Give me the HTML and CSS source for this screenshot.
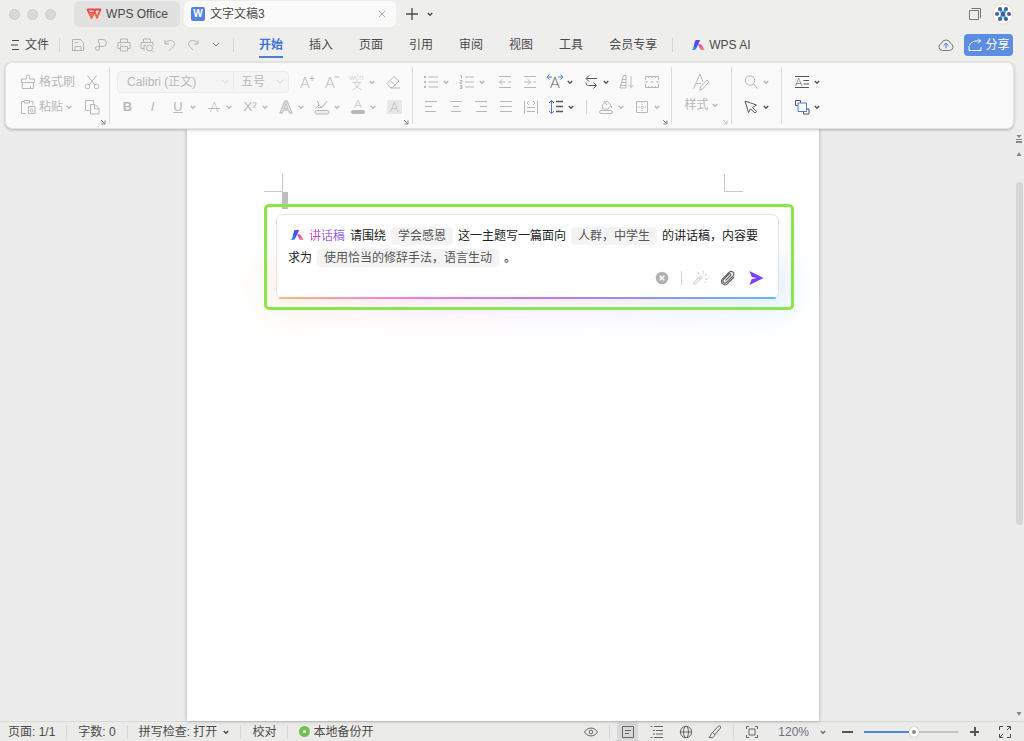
FILE: index.html
```html
<!DOCTYPE html>
<html lang="zh-CN">
<head>
    <meta charset="UTF-8">
    <title>文字文稿3 - WPS Office</title>
    <link rel="stylesheet" href="styles.css">
</head>
<body>
	<!-- 图标 -->
	<svg class="sprite" aria-hidden="true">
		<defs>
			<linearGradient id="ai-blue" x1="0" y1="1" x2="1" y2="0"><stop offset="0" stop-color="#35b4ff"/><stop offset=".5" stop-color="#3a55f5"/><stop offset="1" stop-color="#6d3df2"/></linearGradient>
			<linearGradient id="ai-pink" x1="0" y1="0" x2="1" y2="1"><stop offset="0" stop-color="#a04df5"/><stop offset=".4" stop-color="#f04fc0"/><stop offset="1" stop-color="#ff9a5a"/></linearGradient>
			<linearGradient id="wps-red" x1="0" y1="0" x2="0" y2="1"><stop offset="0" stop-color="#f0404c"/><stop offset="1" stop-color="#ff6a3c"/></linearGradient>
		</defs>
		<symbol id="chev" viewBox="0 0 6 6"><path d="M.8 2 3 4.200 5.200 2" stroke-width="1.500"/></symbol>
		<symbol id="chev-thin" viewBox="0 0 10 6"><path d="M1 1l4 4 4-4"/></symbol>
		<symbol id="corner" viewBox="0 0 6 6"><path d="M1 1l4 4M5 1.500V5H1.500"/></symbol>
		<symbol id="wps" viewBox="0 0 16 12"><path d="M1.500 1.500h6.500L11 10 14.500 1.500H9.500L5.500 10z" fill="none" stroke="url(#wps-red)" stroke-width="1.800" stroke-linejoin="round"/><path d="M3.500 4.500h3L5.500 7" fill="none" stroke="url(#wps-red)" stroke-width="1.200"/></symbol>
		<symbol id="ai" viewBox="0 0 14 12"><path d="M4.800 1h4.400L5.200 9.500Q4.500 11 3 11H.4C1.700 10.500 2 9.500 2.500 8L3.800 3Q4.200 1.400 4.800 1z" fill="url(#ai-blue)" stroke="none"/><path d="M7 5.200H9.300Q10.700 5.300 11.300 6.700L13.600 11H10.600Q9.500 10.900 9 9.800z" fill="url(#ai-pink)" stroke="none"/></symbol>
		<symbol id="menu" viewBox="0 0 12 12"><path d="M3 1.500h7M2 6h7M3 10.500h7"/></symbol>
		<symbol id="close" viewBox="0 0 10 10"><path d="M1 1l8 8M9 1L1 9"/></symbol>
		<symbol id="add" viewBox="0 0 12 12"><path d="M6 0v12M0 6h12" stroke-width="1.300"/></symbol>
		<symbol id="windows" viewBox="0 0 14 14"><path d="M1.500 3.500h9v9h-9zM3.500 1.500h9V11"/></symbol>
		<symbol id="save" viewBox="0 0 16 16"><path d="M2.500 2.500h8l3 3v8h-11zM5 13.500v-4h6v4M5 5.500h3"/></symbol>
		<symbol id="pdf" viewBox="0 0 16 16"><path d="M5.500 6V2.500H10a3.500 3.500 0 0 1 0 7H4.500a2 2 0 1 0 2 2V5.500"/></symbol>
		<symbol id="print" viewBox="0 0 16 16"><path d="M4.500 5V2h7v3M4 11.500H2V5.500h12v6h-2M4.500 9.500h7v4.500h-7zM4 7.500h1.500"/></symbol>
		<symbol id="preview" viewBox="0 0 16 16"><path d="M4.500 5V2h7v3M5 11.500H2V5.500h12v3M5 13.500v-5h2M13 13.500l1.500 1.500"/><circle cx="10.500" cy="11" r="3"/></symbol>
		<symbol id="undo" viewBox="0 0 16 16"><path d="M3 3v4h4M3 7c2-4.500 9-4.500 9.500-.5 0 2.500-2.500 4-5 7"/></symbol>
		<symbol id="redo" viewBox="0 0 16 16"><path d="M13 3v4H9M13 7C11 2.500 4 2.500 3.500 6.500c0 2.500 2 4 4.500 6.500"/></symbol>
		<symbol id="cloud" viewBox="0 0 16 16"><path d="M4.500 13.500A3.700 3.700 0 0 1 3.500 6.300 4.700 4.700 0 0 1 12.500 6.300 3.700 3.700 0 0 1 11.500 13.500z"/><path d="M8 11.500V6.500M5.500 8.700L8 6.300l2.500 2.400" stroke="#4f72e8"/></symbol>
		<symbol id="share" viewBox="0 0 16 16"><path d="M2 9v4.500h12V10M2.500 8.500C3.500 5 7 3.500 13.500 4M11 1.500L13.500 4 11 6.500"/></symbol>
		<symbol id="brush" viewBox="0 0 16 16"><path d="M6.500 5V2.500a1.500 1.500 0 0 1 3 0V5h5v3.500h-13V5h5M2.500 8.500L2 14.500h11.500V8.500M10.500 12v2.500"/></symbol>
		<symbol id="cut" viewBox="0 0 16 16"><path d="M3.500 1.500l7.500 9.500M12.500 1.500L5 11"/><circle cx="3.500" cy="12.500" r="2.300"/><circle cx="12.500" cy="12.500" r="2.300"/></symbol>
		<symbol id="paste" viewBox="0 0 16 16"><path d="M4 2.500H1.500v12H6M10.500 2.500H13V6M4.500 1.500h5v2.500h-5zM8.500 7.500h6.500v7H8.500z"/><circle cx="11.700" cy="11.500" r="1.500"/></symbol>
		<symbol id="copy" viewBox="0 0 16 16"><path d="M5.500 11.500H1.500v-10h8v3M6.500 5.500h4.500l4 4v5.500H6.500zM10.500 5.500V10H15"/></symbol>
		<symbol id="eraser" viewBox="0 0 16 16"><path d="M2 9.500L9 2.500l5 4.500-6.500 6.500H5zM5 6.500l5.500 5M5.500 14h9.500"/></symbol>
		<symbol id="mark" viewBox="0 0 16 16"><path d="M1.500 9.500L5 6 3.500 2M5 6l3 2.500H4M8 8.500L13 2"/><rect x="1" y="11.500" width="14" height="3.500" rx="1.500" fill="#eee"/></symbol>
		<symbol id="bullets" viewBox="0 0 16 16"><path d="M5.500 3h9.500M5.500 8h9.500M5.500 13h9.500"/><path d="M1 3h2M1 8h2M1 13h2" stroke-width="2"/></symbol>
		<symbol id="outdent" viewBox="0 0 16 16"><path d="M2 2.500h12M2 13.500h12M8 8H2.500M5 5.500L2.500 8 5 10.500M11 8h3"/></symbol>
		<symbol id="indent" viewBox="0 0 16 16"><path d="M2 2.500h12M2 13.500h12M11.500 8H14M2 8h6.500M6 5.500L8.500 8 6 10.500"/></symbol>
		<symbol id="swap" viewBox="0 0 16 16"><path d="M14 4.500H3.500M6 1.500l-3 3 3 3M3 8.500c0 2 1 3 2.500 3H13M10.500 8.500l3 3-3 3"/></symbol>
		<symbol id="sort" viewBox="0 0 16 16"><path d="M1 14L4.500 1.500H7V14zM3.500 5.500H7M2.500 8.500H7M1.700 11.500H7M12 2v11.500M9.500 11l2.500 2.500 2.500-2.500"/></symbol>
		<symbol id="film" viewBox="0 0 16 16"><path d="M1.500 6V2.500h13V6M1.500 10v3.500h13V10M4.500 2.500V4M8 2.500V4M11.500 2.500V4M4.500 12v1.500M8 12v1.500M11.500 12v1.500M1 8h3M6.500 8h3M12 8h3"/></symbol>
		<symbol id="left" viewBox="0 0 16 16"><path d="M2 2.500h12M2 7.500h7M2 12.500h11"/></symbol>
		<symbol id="center" viewBox="0 0 16 16"><path d="M2 2.500h12M5 7.500h6M3 12.500h10"/></symbol>
		<symbol id="right" viewBox="0 0 16 16"><path d="M2 2.500h12M7 7.500h7M3 12.500h11"/></symbol>
		<symbol id="justify" viewBox="0 0 16 16"><path d="M2 2.500h12M2 7.500h12M2 12.500h12"/></symbol>
		<symbol id="spread" viewBox="0 0 16 16"><path d="M1.500 1.500v13M14.500 1.500v13M4 8.500h8M4 12.500h8M6 2L4 4l2 2M10 2l2 2-2 2"/></symbol>
		<symbol id="spacing" viewBox="0 0 16 16"><path d="M8 2.500h7M8 7.500h7M8 12.500h7" stroke-width="1.300"/><path d="M3.500 1.500v13M1 4l2.500-2.500L6 4M1 12l2.500 2.500L6 12" stroke="#4f7be8"/></symbol>
		<symbol id="bucket" viewBox="0 0 16 16"><path d="M4 6l5-4 4 4-3 4H5zM6 2l3 4M13.500 7v2"/><rect x="1.500" y="11.500" width="13" height="3" rx="1.500"/></symbol>
		<symbol id="border" viewBox="0 0 16 16"><path d="M2.500 2.500h11v11h-11z"/><path d="M8 3v10M3 8h10" stroke-dasharray="1 1"/></symbol>
		<symbol id="styles" viewBox="0 0 18 18"><path d="M1.500 15.500L8 1l3 8M4 10.500h5M15 7l2 2-6.500 7-2.500 1 .5-3z"/></symbol>
		<symbol id="find" viewBox="0 0 16 16"><circle cx="7" cy="6.500" r="4.700"/><path d="M10.500 10l4 4.500"/></symbol>
		<symbol id="pointer" viewBox="0 0 16 16"><path d="M2 2l11.500 4-4 2.500 4 4-1.500 1.500-4.500-4-2 3.500z"/></symbol>
		<symbol id="shapes" viewBox="0 0 16 16"><path d="M4 6.500H1.500v-5h5V4M9.500 12.500v2.500h5.500v-5H12"/><path d="M4 4h8.500v8.500H4z" stroke="#4f7be8"/></symbol>
		<symbol id="wand" viewBox="0 0 16 16"><path d="M1.500 13l7-7 1.500 1.500-7 7zM7 7.500L8.500 9M11 1v2.500M6 2l1 2M15 4l-2 1M15.500 9H13M14 13l-1.500-1.500"/></symbol>
		<symbol id="clip" viewBox="0 0 16 16"><path d="M5.500 10.500l5-5c1.300-1.300-.4-2.500-1.600-1.300L3.700 9.400c-2.200 2.200.9 5 3.100 2.800L13 6c2.800-2.800-1.300-6.200-4-3.500L2.700 8.600c-3.600 3.600 1.500 8.300 5 4.800L14 7.300" stroke-width="1.200"/></symbol>
		<symbol id="send" viewBox="0 0 16 16"><path d="M1.500 1L15.500 8 1.500 15 3.800 9 9 8 3.800 7z" fill="#7b3ff5" stroke="none"/></symbol>
		<symbol id="clear" viewBox="0 0 14 14"><circle cx="7" cy="7" r="6.300" fill="#b3b3b3" stroke="none"/><path d="M4.700 4.700l4.600 4.600M9.300 4.700L4.700 9.300" stroke="#fff" stroke-width="1.500"/></symbol>
		<symbol id="eye" viewBox="0 0 16 16"><path d="M1.500 8C4.500 2.800 11.500 2.800 14.500 8 11.500 13.200 4.500 13.200 1.500 8z"/><circle cx="8" cy="8" r="1.800"/></symbol>
		<symbol id="page" viewBox="0 0 16 16"><path d="M2.500 2.500h11v11h-11zM5 6.500h6M5 9.500h4"/></symbol>
		<symbol id="outline-view" viewBox="0 0 16 16"><path d="M1.500 2.500h2M5 2.500h9M4 6.500h2M7 6.500h7M4 10h2M7 10h7M1.500 13.500h2M5 13.500h9"/></symbol>
		<symbol id="globe" viewBox="0 0 16 16"><circle cx="8" cy="8" r="5.700"/><ellipse cx="8" cy="8" rx="2.500" ry="5.700"/><path d="M2.300 8h11.400"/></symbol>
		<symbol id="pen" viewBox="0 0 16 16"><path d="M5.500 8.500l6-6.500c1.500-.5 2.500.5 2 2L8 10.500zM5.500 8.500c-2 .5-1 3-3.500 5 3 .5 6-.5 6-3"/></symbol>
		<symbol id="focus" viewBox="0 0 16 16"><path d="M2.500 5V2.500H5M11 2.500h2.500V5M13.500 11v2.500H11M5 13.500H2.500V11M5 5h6v6H5z"/></symbol>
		<symbol id="full" viewBox="0 0 16 16"><path d="M2.500 6V2.500H6M10 2.500h3.500V6M13.500 10v3.500H10M6 13.500H2.500V10M10 6l3-3M3 13l3-3"/></symbol>
	</svg>

	<!-- 标题栏 -->
	<header class="titlebar">
		<div class="lights"><i></i><i></i><i></i></div>
		<button class="tab tab-home"><svg class="logo"><use href="#wps"/></svg>WPS Office</button>
		<div class="tab tab-doc">
			<span class="doc-icon">W</span>
			<span class="doc-name">文字文稿3</span>
			<button class="tab-close" aria-label="关闭"><svg class="ico-s"><use href="#close"/></svg></button>
		</div>
		<button class="new-tab" aria-label="新建"><svg class="ico-m"><use href="#add"/></svg></button>
		<button class="new-more" aria-label="更多"><svg class="chev"><use href="#chev"/></svg></button>
		<button class="win-btn" aria-label="窗口"><svg class="ico-w"><use href="#windows"/></svg></button>
		<svg class="avatar" viewBox="0 0 22 22">
			<circle cx="11" cy="11" r="10" fill="#fff" stroke="#f3dcc0"/>
			<path d="M8 6l6 10M14 6L8 16" stroke="#3cc8d8" stroke-width="3"/>
			<g fill="#4a5a9c"><circle cx="8" cy="6" r="2"/><circle cx="14" cy="6" r="2"/><circle cx="5" cy="11" r="2"/><circle cx="11" cy="11" r="2.300"/><circle cx="17" cy="11" r="2"/><circle cx="8" cy="16" r="2"/><circle cx="14" cy="16" r="2"/></g>
		</svg>
	</header>

	<!-- 菜单栏 -->
	<nav class="menubar">
		<button class="file"><svg class="ico-m"><use href="#menu"/></svg>文件</button>
		<span class="sep"></span>
		<div class="quick">
			<button aria-label="保存"><svg class="ico"><use href="#save"/></svg></button>
			<button aria-label="输出为PDF"><svg class="ico"><use href="#pdf"/></svg></button>
			<button aria-label="打印"><svg class="ico"><use href="#print"/></svg></button>
			<button aria-label="打印预览"><svg class="ico"><use href="#preview"/></svg></button>
			<button aria-label="撤销"><svg class="ico"><use href="#undo"/></svg></button>
			<button aria-label="恢复"><svg class="ico"><use href="#redo"/></svg></button>
			<button class="dark" aria-label="自定义"><svg class="chev-w"><use href="#chev-thin"/></svg></button>
		</div>
		<span class="sep"></span>
		<div class="menus">
			<a href="#" class="on">开始</a>
			<a href="#">插入</a>
			<a href="#">页面</a>
			<a href="#">引用</a>
			<a href="#">审阅</a>
			<a href="#">视图</a>
			<a href="#">工具</a>
			<a href="#">会员专享</a>
		</div>
		<span class="sep"></span>
		<a href="#" class="wps-ai"><svg class="ai"><use href="#ai"/></svg>WPS AI</a>
		<button class="cloud" aria-label="云同步"><svg class="ico"><use href="#cloud"/></svg></button>
		<button class="share"><svg class="ico"><use href="#share"/></svg>分享</button>
	</nav>

	<!-- 功能区 -->
	<section class="ribbon">
		<div class="group g-clip">
			<div class="row">
				<button class="label"><svg class="ico"><use href="#brush"/></svg>格式刷</button>
				<button class="tool" aria-label="剪切"><svg class="ico"><use href="#cut"/></svg></button>
			</div>
			<div class="row">
				<button class="label"><svg class="ico"><use href="#paste"/></svg>粘贴<svg class="chev"><use href="#chev"/></svg></button>
				<button class="tool" aria-label="复制"><svg class="ico"><use href="#copy"/></svg></button>
			</div>
			<svg class="corner"><use href="#corner"/></svg>
		</div>
		<div class="group g-font">
			<div class="row">
				<div class="combo">
					<span class="pick pick-font"><select aria-label="字体"><option>Calibri (正文)</option></select><svg class="chev-w"><use href="#chev-thin"/></svg></span>
					<span class="pick pick-size"><select aria-label="字号"><option>五号</option></select><svg class="chev-w"><use href="#chev-thin"/></svg></span>
				</div>
				<button class="tool" aria-label="增大字号"><svg class="ico" viewBox="0 0 16 16"><text x="1" y="14" font-size="15">A</text><path d="M10.500 4.500h5M13 2v5"/></svg></button>
				<button class="tool" aria-label="减小字号"><svg class="ico" viewBox="0 0 16 16"><text x="1" y="14" font-size="15">A</text><path d="M10.500 3h5"/></svg></button>
				<button class="drop" aria-label="拼音指南"><svg class="ico" viewBox="0 0 16 16"><text x="0" y="6" font-size="8">wén</text><text x="3" y="15" font-size="10">文</text></svg><svg class="chev"><use href="#chev"/></svg></button>
				<button class="tool" aria-label="清除格式"><svg class="ico"><use href="#eraser"/></svg></button>
			</div>
			<div class="row">
				<button class="tool"><b>B</b></button>
				<button class="tool"><em>I</em></button>
				<button class="drop"><u>U</u><svg class="chev"><use href="#chev"/></svg></button>
				<button class="drop" aria-label="删除线"><svg class="ico" viewBox="0 0 16 16"><text x="4" y="13" font-size="13">A</text><path d="M2 9.500h12"/></svg><svg class="chev"><use href="#chev"/></svg></button>
				<button class="drop"><span class="sup">X²</span><svg class="chev"><use href="#chev"/></svg></button>
				<button class="drop" aria-label="文字效果"><svg class="ico" viewBox="0 0 16 16"><text x="2" y="14" font-size="17" class="hollow">A</text></svg><svg class="chev"><use href="#chev"/></svg></button>
				<button class="drop" aria-label="突出显示"><svg class="ico"><use href="#mark"/></svg><svg class="chev"><use href="#chev"/></svg></button>
				<button class="drop" aria-label="字体颜色"><svg class="ico" viewBox="0 0 16 16"><text x="4" y="9" font-size="12">A</text><rect x="1" y="11" width="14" height="4" rx="2" class="bar"/></svg><svg class="chev"><use href="#chev"/></svg></button>
				<button class="tool shade" aria-label="字符底纹"><svg class="ico" viewBox="0 0 16 16"><rect x="1" y="1" width="15" height="14" rx="1"/><text x="4" y="13" font-size="13">A</text></svg></button>
			</div>
			<svg class="corner"><use href="#corner"/></svg>
		</div>
		<div class="group g-para">
			<div class="row">
				<div class="lists">
					<button class="drop" aria-label="项目符号"><svg class="ico"><use href="#bullets"/></svg><svg class="chev"><use href="#chev"/></svg></button>
					<button class="drop" aria-label="编号"><svg class="ico" viewBox="0 0 16 16"><path d="M6 3h9M6 8h9M6 13h9"/><path d="M1 1.500h1.500v3M1 6.500h2v1.500H1v1.500h2M1 11.500h2v3H1M1 13h2"/></svg><svg class="chev"><use href="#chev"/></svg></button>
				</div>
				<button class="tool" aria-label="减少缩进"><svg class="ico"><use href="#outdent"/></svg></button>
				<button class="tool" aria-label="增加缩进"><svg class="ico"><use href="#indent"/></svg></button>
				<button class="drop dark" aria-label="字符缩放"><svg class="ico" viewBox="0 0 16 16"><text x="3" y="14" font-size="15">A</text><path d="M0 3h5M2.500 .5L0 3l2.500 2.500M11 3h5M13.500 .5L16 3l-2.500 2.500" stroke="#4f7be8"/></svg><svg class="chev"><use href="#chev"/></svg></button>
				<button class="drop dark" aria-label="文字方向"><svg class="ico"><use href="#swap"/></svg><svg class="chev"><use href="#chev"/></svg></button>
				<button class="tool" aria-label="排序"><svg class="ico"><use href="#sort"/></svg></button>
				<button class="tool" aria-label="制表位"><svg class="ico"><use href="#film"/></svg></button>
			</div>
			<div class="row">
				<button class="tool" aria-label="左对齐"><svg class="ico"><use href="#left"/></svg></button>
				<button class="tool" aria-label="居中"><svg class="ico"><use href="#center"/></svg></button>
				<button class="tool" aria-label="右对齐"><svg class="ico"><use href="#right"/></svg></button>
				<button class="tool" aria-label="两端对齐"><svg class="ico"><use href="#justify"/></svg></button>
				<button class="tool" aria-label="分散对齐"><svg class="ico"><use href="#spread"/></svg></button>
				<button class="drop dark" aria-label="行距"><svg class="ico"><use href="#spacing"/></svg><svg class="chev"><use href="#chev"/></svg></button>
				<span class="sep"></span>
				<button class="drop" aria-label="底纹"><svg class="ico"><use href="#bucket"/></svg><svg class="chev"><use href="#chev"/></svg></button>
				<button class="drop" aria-label="边框"><svg class="ico"><use href="#border"/></svg><svg class="chev"><use href="#chev"/></svg></button>
			</div>
			<svg class="corner"><use href="#corner"/></svg>
		</div>
		<div class="group g-style">
			<button class="big"><svg class="ico-l"><use href="#styles"/></svg><span>样式<svg class="chev"><use href="#chev"/></svg></span></button>
			<svg class="corner pale"><use href="#corner"/></svg>
		</div>
		<div class="group g-find">
			<div class="row"><button class="drop" aria-label="查找"><svg class="ico"><use href="#find"/></svg><svg class="chev"><use href="#chev"/></svg></button></div>
			<div class="row"><button class="drop dark" aria-label="选择"><svg class="ico"><use href="#pointer"/></svg><svg class="chev"><use href="#chev"/></svg></button></div>
		</div>
		<div class="group g-more">
			<div class="row"><button class="drop dark" aria-label="排版"><svg class="ico" viewBox="0 0 16 16"><path d="M1 2.500h14M1 13.500h14M9.500 6.500H15M9.500 10H15"/><text x="1" y="12" font-size="11">A</text></svg><svg class="chev"><use href="#chev"/></svg></button></div>
			<div class="row"><button class="drop dark" aria-label="排列"><svg class="ico"><use href="#shapes"/></svg><svg class="chev"><use href="#chev"/></svg></button></div>
		</div>
	</section>

	<!-- 文档区 -->
	<main class="work">
		<div class="desk">
			<article class="paper">
				<div class="crops"><i class="crop-l"></i><i class="crop-r"></i></div>
				<div class="caret"></div>
				<div class="frame">
					<div class="ask">
						<p class="prompt"><svg class="ai"><use href="#ai"/></svg><span class="kind">讲话稿</span>请围绕<span class="chip">学会感恩</span>这一主题写一篇面向<span class="chip">人群，中学生</span>的讲话稿，内容要求为<span class="chip">使用恰当的修辞手法，语言生动</span>。</p>
						<div class="actions">
							<button aria-label="清空"><svg class="ico-w"><use href="#clear"/></svg></button>
							<span class="sep"></span>
							<button class="pale" aria-label="润色"><svg class="ico"><use href="#wand"/></svg></button>
							<button aria-label="附件"><svg class="ico"><use href="#clip"/></svg></button>
							<button aria-label="发送"><svg class="ico"><use href="#send"/></svg></button>
						</div>
					</div>
				</div>
			</article>
		</div>
		<div class="scroll">
			<svg class="arrow" viewBox="0 0 8 10"><path d="M1.500 1h5L4 4zM1 5h6v1H1zM1 7h6v2H1z"/></svg>
			<svg class="arrow" viewBox="0 0 8 10"><path d="M4 3l2.500 4h-5z"/></svg>
			<div class="track"><div class="thumb"></div></div>
			<svg class="arrow" viewBox="0 0 8 10"><path d="M1.500 3h5L4 7z"/></svg>
		</div>
	</main>

	<!-- 状态栏 -->
	<footer class="status">
		<span>页面: 1/1</span>
		<span class="sep"></span>
		<span>字数: 0</span>
		<span class="sep"></span>
		<button class="spell">拼写检查: 打开<svg class="chev"><use href="#chev"/></svg></button>
		<span class="sep"></span>
		<button>校对</button>
		<span class="sep"></span>
		<button class="backup"><i class="dot"></i>本地备份开</button>
		<div class="views">
			<button aria-label="护眼模式"><svg class="ico"><use href="#eye"/></svg></button>
			<span class="sep"></span>
			<button class="on" aria-label="页面视图"><svg class="ico"><use href="#page"/></svg></button>
			<button aria-label="大纲"><svg class="ico"><use href="#outline-view"/></svg></button>
			<button aria-label="Web版式"><svg class="ico"><use href="#globe"/></svg></button>
			<button aria-label="写作模式"><svg class="ico"><use href="#pen"/></svg></button>
			<span class="sep"></span>
			<button aria-label="最佳显示"><svg class="ico"><use href="#focus"/></svg></button>
		</div>
		<button class="percent">120%<svg class="chev"><use href="#chev"/></svg></button>
		<div class="zoom">
			<button class="minus" aria-label="缩小"></button>
			<input type="range" min="0" max="100" value="53" aria-label="缩放">
			<button class="plus" aria-label="放大"></button>
		</div>
		<button class="fullscreen" aria-label="全屏"><svg class="ico"><use href="#full"/></svg></button>
	</footer>
</body>
</html>
```
FILE: styles.css
```css
* {
	box-sizing: border-box;
}
body {
	display: flex;
	flex-direction: column;
	height: 100vh;
	margin: 0;
	overflow: hidden;
	background: #eeeeec;
	color: #4a4a4a;
	font: 12px/16px "Liberation Sans", "Noto Sans CJK SC", sans-serif;
}
button {
	display: flex;
	align-items: center;
	justify-content: center;
	flex-shrink: 0;
	margin: 0;
	padding: 0;
	border: 0;
	background: none;
	color: inherit;
	font: inherit;
	white-space: nowrap;
}
a {
	color: inherit;
	text-decoration: none;
}
svg {
	flex-shrink: 0;
	fill: none;
	stroke: currentColor;
}
.sprite {
	position: absolute;
	width: 0;
	height: 0;
}
.ico {
	width: 16px;
	height: 16px;
	overflow: visible;
}
.ico text {
	fill: currentColor;
	stroke: none;
	font-family: Lato, "Noto Sans CJK SC", sans-serif;
	font-weight: 300;
}
.ico .hollow {
	fill: none;
	stroke: currentColor;
	stroke-width: 1;
	font-weight: bold;
}
.ico .bar {
	fill: currentColor;
	stroke: none;
}
.shade rect {
	fill: #e8e8e8;
	stroke: none;
}
.ico-s {
	width: 8px;
	height: 8px;
}
.ico-m {
	width: 12px;
	height: 12px;
}
.ico-w {
	width: 14px;
	height: 14px;
}
.ico-l {
	width: 18px;
	height: 18px;
}
.chev {
	width: 6px;
	height: 6px;
}
.chev-w {
	width: 8px;
	height: 5px;
}
.ai {
	width: 14px;
	height: 12px;
}
.sep {
	flex-shrink: 0;
	width: 1px;
	height: 14px;
	background: #d6d6d6;
}

/* 标题栏 */
.titlebar {
	display: flex;
	align-items: center;
	flex-shrink: 0;
	height: 28px;
	padding: 0 10px 0 9px;
}
.lights {
	display: flex;
	gap: 7px;
	width: 65px;
}
.lights i {
	width: 11px;
	height: 11px;
	border: 1px solid #cdcdcb;
	border-radius: 50%;
	background: #d9d9d9;
}
.tab {
	display: flex;
	align-items: center;
	height: 26px;
	border-radius: 6px;
}
.tab-home {
	gap: 4px;
	width: 106px;
	margin-right: 4px;
	background: #e1e1e0;
}
.logo {
	width: 16px;
	height: 12px;
}
.tab-doc {
	flex: 0 1 212px;
	padding: 0 10px 0 7px;
	background: #fafafa;
}
.doc-icon {
	width: 14px;
	height: 14px;
	border-radius: 2px;
	background: #5580e6;
	color: #fff;
	font-size: 10px;
	font-weight: bold;
	line-height: 14px;
	text-align: center;
}
.doc-name {
	flex: 1;
	padding-left: 5px;
}
.tab-close {
	color: #999;
}
.new-tab {
	margin: 0 9px 0 10px;
}
.win-btn {
	margin: 0 10px 0 auto;
	color: #777;
}
.avatar {
	width: 22px;
	height: 22px;
	stroke: none;
}

/* 菜单栏 */
.menubar {
	display: flex;
	align-items: center;
	flex-shrink: 0;
	height: 33px;
	padding: 0 11px 0 9px;
}
.file {
	gap: 4px;
	margin-right: 10px;
}
.quick {
	display: flex;
	flex-shrink: 0;
	margin: 0 6px 0 6px;
	color: #b5b5b5;
}
.quick button {
	width: 23px;
}
.quick .dark,
.dark {
	color: #555;
}
.menus {
	display: flex;
	flex-shrink: 0;
	gap: 26px;
	margin: 0 15px 0 25px;
}
.menus a {
	padding: 5px 0 3px;
	border-bottom: 2px solid transparent;
}
.menus .on {
	border-color: #4d7fd6;
	color: #3c74d8;
	font-weight: bold;
}
.wps-ai {
	display: flex;
	align-items: center;
	gap: 4px;
	margin-left: 18px;
}
.cloud {
	margin: 0 10px 0 auto;
	color: #777;
}
.share {
	gap: 2px;
	width: 49px;
	height: 22px;
	border-radius: 4px;
	background: #5b8ee3;
	color: #fff;
}

/* 功能区 */
.ribbon {
	position: relative;
	z-index: 1;
	display: flex;
	flex-shrink: 0;
	height: 67px;
	margin: 1px 10px 0 5px;
	padding: 4px 0;
	border: 1px solid #e3e3e3;
	border-radius: 7px;
	background: #fafafa;
	box-shadow: 0 1px 3px rgba(0, 0, 0, .25);
	color: #b8b8b8;
}
.group {
	position: relative;
	flex-shrink: 0;
	padding: 2px 0 0 5px;
	border-right: 1px solid #dedede;
}
.row {
	display: flex;
	align-items: center;
	height: 25px;
}
.g-clip {
	width: 104px;
	padding-left: 14px;
}
.g-font {
	width: 303px;
}
.g-para {
	width: 259px;
}
.g-style {
	width: 60px;
}
.g-find {
	width: 50px;
	padding-left: 6px;
}
.g-more {
	flex: 1;
	padding-left: 7px;
	border: 0;
}
.label {
	justify-content: flex-start;
	gap: 3px;
	width: 59px;
}
.tool {
	width: 25px;
	height: 24px;
}
.drop {
	gap: 4px;
	width: 36px;
	height: 24px;
}
.drop u,
.drop .sup {
	width: 16px;
	text-align: center;
}
.tool b,
.tool em,
.drop u,
.drop .sup {
	font-size: 13px;
}
.lists {
	display: flex;
	margin-right: 2px;
}
.row .sep {
	margin: 0 6px 0 7px;
}
.combo {
	display: flex;
	width: 172px;
	height: 22px;
	margin: 0 5px 0 2px;
	border: 1px solid #ececec;
	border-radius: 4px;
	background: #f5f5f5;
}
.pick {
	display: flex;
	align-items: center;
	padding: 0 4px 0 9px;
}
.pick-font {
	flex: 1;
}
.pick-size {
	width: 55px;
	padding-left: 7px;
	border-left: 1px solid #ececec;
}
.pick select {
	flex: 1;
	width: 0;
	padding: 0;
	border: 0;
	appearance: none;
	background: none;
	color: #b8b8b8;
	font: inherit;
}
.pick .chev-w {
	color: #ccc;
}
.corner {
	position: absolute;
	right: 3px;
	bottom: -1px;
	width: 6px;
	height: 6px;
	color: #888;
}
.big {
	flex-direction: column;
	gap: 6px;
	width: 48px;
	padding-top: 4px;
}
.big span {
	display: flex;
	align-items: center;
	gap: 3px;
}
.pale {
	color: #c4c4c4;
}

/* 文档区 */
.work {
	display: flex;
	flex: 1;
	min-height: 0;
	background: #ececec;
}
.desk {
	display: flex;
	flex: 1;
	justify-content: center;
	padding-left: 8px;
}
.paper {
	position: relative;
	z-index: 0;
	width: 632px;
	padding: 45px 25px 0 77px;
	background: #fff;
	box-shadow: 0 0 4px rgba(0, 0, 0, .3);
}
.crops {
	display: flex;
	justify-content: space-between;
	margin-right: 51px;
}
.crops i {
	width: 19px;
	height: 18px;
	border-bottom: 1px solid #c9c9c9;
}
.crop-l {
	border-right: 1px solid #c9c9c9;
}
.crop-r {
	border-left: 1px solid #c9c9c9;
}
.caret {
	width: 6px;
	height: 12px;
	margin-left: 18px;
	background: #bdbdbd;
	box-shadow: 0 5px #bdbdbd;
}
.frame {
	position: relative;
	padding: 7px 12px 8px 9px;
	border: 3px solid #8be64a;
	border-radius: 5px;
}
.ask {
	position: relative;
	padding: 10px 11px 11px;
	border: 1px solid #e4e4e4;
	border-radius: 7px;
	background: #fff;
	color: #222;
}
/* 底部彩色渐变线 */
.ask::after {
	content: "";
	position: absolute;
	right: 2px;
	bottom: -1px;
	left: 2px;
	height: 2px;
	border-radius: 2px;
	background: linear-gradient(90deg, #ffb978, #f77fd0 25%, #c17ae8 50%, #9b8cf2 70%, #5bbcf7);
}
.frame::before {
	content: "";
	position: absolute;
	z-index: -1;
	right: 0;
	bottom: -6px;
	left: 0;
	height: 54px;
	background: linear-gradient(90deg, #ffe3cc, #fbd5ef 30%, #e6d9fa 65%, #c6e4fa);
	filter: blur(16px);
	opacity: .5;
}
.prompt {
	margin: 0;
	line-height: 22px;
}
.prompt .ai {
	margin: 0 5px 0 2px;
	vertical-align: -1px;
}
.kind {
	margin-right: 5px;
	background: linear-gradient(90deg, #d24fc4, #7a55f5);
	background-clip: text;
	color: transparent;
}
.chip {
	margin: 0 5px;
	padding: 2px 7px;
	border-radius: 4px;
	background: #f4f4f4;
	color: #555;
	white-space: nowrap;
}
.actions {
	display: flex;
	align-items: center;
	justify-content: flex-end;
	gap: 12px;
	height: 18px;
	padding-right: 3px;
	color: #666;
}
.actions .sep {
	margin-right: -2px;
}
.actions .pale {
	color: #c4c4c4;
}
.scroll {
	display: flex;
	flex-direction: column;
	align-items: center;
	width: 10px;
	padding-top: 5px;
	margin-left: 16px;
}
.arrow {
	width: 8px;
	height: 10px;
	margin-bottom: 5px;
	fill: #888;
	stroke: none;
}
.arrow:last-child {
	margin-bottom: 2px;
}
.track {
	flex: 1;
	padding-top: 18px;
}
.thumb {
	width: 7px;
	height: 65%;
	border-radius: 4px;
	background: #d6d6d6;
}

/* 状态栏 */
.status {
	display: flex;
	align-items: center;
	flex-shrink: 0;
	height: 20px;
	padding: 0 11px 0 8px;
	border-top: 1px solid #d8d8d8;
	background: #ebebe9;
}
.status > .sep {
	margin: 0 11px;
}
.spell {
	gap: 6px;
}
.backup {
	gap: 3px;
}
.dot {
	width: 11px;
	height: 11px;
	border: 4px solid #6fbf52;
	border-radius: 50%;
	background: #fff;
}
.views {
	display: flex;
	align-items: center;
	gap: 8px;
	margin-left: auto;
	color: #666;
}
.views button {
	width: 21px;
	height: 19px;
}
.views .sep {
	margin-right: -1px;
}
.views .on {
	border-radius: 3px 3px 0 0;
	background: #d8d8d8;
}
.percent {
	gap: 11px;
	margin: 0 16px;
	color: #6b7080;
}
.zoom {
	display: flex;
	align-items: center;
	gap: 11px;
	margin-right: 17px;
}
.minus,
.plus {
	width: 11px;
	height: 11px;
	background: linear-gradient(#555, #555) center / 11px 2px no-repeat;
}
.plus {
	background: linear-gradient(#555, #555) center / 9px 2px no-repeat, linear-gradient(#555, #555) center / 2px 9px no-repeat;
}
.zoom input {
	width: 94px;
	height: 10px;
	margin: 0;
	appearance: none;
	background: linear-gradient(90deg, #4d86e0 53%, #c4c4c4 53%) center / 100% 2px no-repeat;
}
.zoom input::-webkit-slider-thumb {
	width: 10px;
	height: 10px;
	border: 3px solid #fff;
	border-radius: 50%;
	appearance: none;
	background: #888;
	box-shadow: 0 0 1px #888;
}
```
